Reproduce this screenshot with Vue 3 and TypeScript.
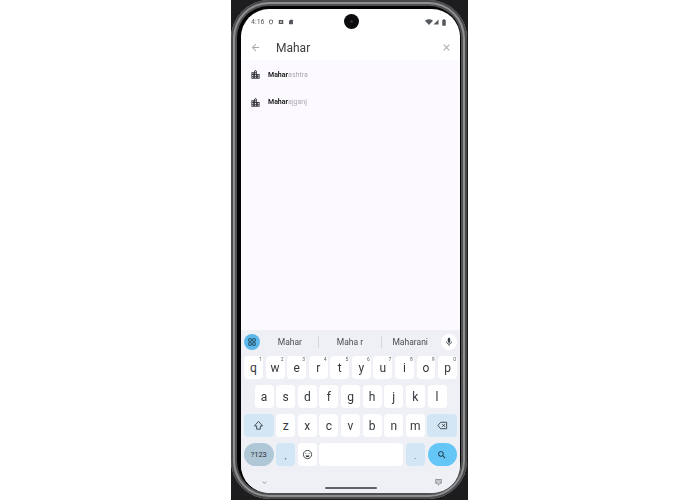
<script setup lang="ts">
const results = [
  { match: 'Mahar', rest: 'ashtra' },
  { match: 'Mahar', rest: 'ajganj' }
]

const suggestions = ['Mahar', 'Maha r', 'Maharani']

const topRow = [
  ['q', '1'], ['w', '2'], ['e', '3'], ['r', '4'], ['t', '5'],
  ['y', '6'], ['u', '7'], ['i', '8'], ['o', '9'], ['p', '0']
]
const midRow = ['a', 's', 'd', 'f', 'g', 'h', 'j', 'k', 'l']
const lowRow = ['z', 'x', 'c', 'v', 'b', 'n', 'm']
</script>

<template>
  <div class="page">
    <div class="phone">
      <div class="bezel">
        <div class="screen">
          <span class="camera"><i></i></span>

          <div class="status-bar">
            <div class="status-left">
              <span class="time">4:16</span>
              <svg class="st shield" viewBox="0 0 24 24"><path d="M12 2l8 3v6c0 5-3.400 9.400-8 11-4.600-1.600-8-6-8-11V5l8-3zm0 3L7 7v4c0 3.400 2.100 6.500 5 7.800 2.900-1.300 5-4.400 5-7.800V7l-5-2z" /></svg>
              <svg class="st" viewBox="0 0 24 24"><path d="M3 4h18v16H3V4zm6 5v6h6V9H9z" /></svg>
              <svg class="st" viewBox="0 0 24 24"><path d="M9 3h9a2 2 0 0 1 2 2v15a1 1 0 0 1-1 1H5a1 1 0 0 1-1-1V8l5-5z" /></svg>
            </div>
            <div class="status-right">
              <svg class="st wifi" viewBox="0 2 24 18"><path d="M12 20L0 7c7-6 17-6 24 0L12 20z" /></svg>
              <svg class="st" viewBox="0 0 24 24"><path d="M22 2v20H2L22 2z" /></svg>
              <svg class="st battery" viewBox="0 0 12 24"><path d="M3 3V1h6v2h2a1 1 0 0 1 1 1v18a1 1 0 0 1-1 1H1a1 1 0 0 1-1-1V4a1 1 0 0 1 1-1h2z" /></svg>
            </div>
          </div>

          <div class="search-bar">
            <svg class="bar-icon" viewBox="0 0 24 24"><path d="M20 11H7.830l5.590-5.590L12 4l-8 8 8 8 1.410-1.410L7.830 13H20v-2z" /></svg>
            <span class="query">Mahar</span>
            <svg class="bar-icon" viewBox="0 0 24 24"><path d="M19 6.410L17.590 5 12 10.590 6.410 5 5 6.410 10.590 12 5 17.590 6.410 19 12 13.410 17.590 19 19 17.590 13.410 12z" /></svg>
          </div>

          <div class="results">
            <div v-for="item in results" :key="item.rest" class="result">
              <svg class="city" viewBox="0 0 24 24"><path d="M15 11V5l-3-3-3 3v2H3v14h18V11h-6zm-8 8H5v-2h2v2zm0-4H5v-2h2v2zm0-4H5V9h2v2zm6 8h-2v-2h2v2zm0-4h-2v-2h2v2zm0-4h-2V9h2v2zm0-4h-2V5h2v2zm6 12h-2v-2h2v2zm0-4h-2v-2h2v2z" /></svg>
              <span class="result-text"><b>{{ item.match }}</b><span>{{ item.rest }}</span></span>
            </div>
          </div>

          <div class="keyboard">
            <div class="suggest-row">
              <span class="round-btn blue">
                <svg viewBox="0 0 24 24" fill="none" stroke="#1c3a4d" stroke-width="2.200"><rect x="4" y="4" width="6.500" height="6.500" rx="1.500" /><rect x="13.500" y="4" width="6.500" height="6.500" rx="1.500" /><rect x="4" y="13.500" width="6.500" height="6.500" rx="1.500" /><rect x="13.500" y="13.500" width="6.500" height="6.500" rx="1.500" /></svg>
              </span>
              <div class="suggestions">
                <span v-for="word in suggestions" :key="word" class="suggestion">{{ word }}</span>
              </div>
              <span class="round-btn white">
                <svg viewBox="0 0 24 24" fill="#3a3f44"><path d="M12 14a3 3 0 0 0 3-3V5a3 3 0 0 0-6 0v6a3 3 0 0 0 3 3zm5.300-3c0 3-2.500 5.100-5.300 5.100S6.700 14 6.700 11H5c0 3.400 2.700 6.200 6 6.700V21h2v-3.300c3.300-.5 6-3.300 6-6.700h-1.700z" /></svg>
              </span>
            </div>

            <div class="keys">
              <div class="key-row">
                <span v-for="k in topRow" :key="k[0]" class="key">{{ k[0] }}<sup>{{ k[1] }}</sup></span>
              </div>
              <div class="key-row inset">
                <span v-for="k in midRow" :key="k" class="key">{{ k }}</span>
              </div>
              <div class="key-row">
                <span class="key wide fn">
                  <svg viewBox="0 0 24 24" fill="none" stroke="#2b3034" stroke-width="1.800" stroke-linejoin="round"><path d="M12 3l9 10h-5v7H8v-7H3l9-10z" /></svg>
                </span>
                <span v-for="k in lowRow" :key="k" class="key">{{ k }}</span>
                <span class="key wide fn">
                  <svg viewBox="0 0 24 24" fill="none" stroke="#2b3034" stroke-width="1.800" stroke-linejoin="round"><path d="M8 5h13v14H8l-6-7 6-7z" /><path d="M11.500 9l6 6m0-6l-6 6" /></svg>
                </span>
              </div>
              <div class="key-row">
                <span class="key wide pill grey">?123</span>
                <span class="key fn mark">,</span>
                <span class="key">
                  <svg class="emoji" viewBox="0 0 24 24" fill="none" stroke="#2b3034" stroke-width="1.800"><circle cx="12" cy="12" r="9" /><circle cx="8.500" cy="10" r="1.100" fill="#2b3034" stroke="none" /><circle cx="15.500" cy="10" r="1.100" fill="#2b3034" stroke="none" /><path d="M7.500 14h9c-.6 2.300-2.300 3.500-4.500 3.500S8.100 16.300 7.500 14z" fill="#2b3034" stroke="none" /></svg>
                </span>
                <span class="key space"></span>
                <span class="key fn mark">.</span>
                <span class="key wide pill action">
                  <svg class="search" viewBox="0 0 24 24" fill="#16303f"><path d="M15.500 14h-.79l-.28-.27A6.470 6.470 0 0 0 16 9.500 6.500 6.500 0 1 0 9.500 16c1.610 0 3.090-.59 4.230-1.570l.27.28v.79l5 4.990L20.490 19l-4.990-5zm-6 0C7.010 14 5 11.990 5 9.500S7.010 5 9.500 5 14 7.010 14 9.500 11.990 14 9.500 14z" /></svg>
                </span>
              </div>
            </div>

            <div class="nav-row">
              <svg viewBox="0 0 24 24" fill="none" stroke="#73777c" stroke-width="2.600"><path d="M6 9l6 6 6-6" /></svg>
              <svg class="kb-hide" viewBox="0 0 24 24" fill="#94989d"><path d="M20 3H4c-1.100 0-1.990.9-1.990 2L2 15c0 1.100.9 2 2 2h16c1.100 0 2-.9 2-2V5c0-1.100-.9-2-2-2zm-9 3h2v2h-2V6zm0 3h2v2h-2V9zM8 6h2v2H8V6zm0 3h2v2H8V9zm-1 2H5V9h2v2zm0-3H5V6h2v2zm9 7H8v-2h8v2zm0-4h-2V9h2v2zm0-3h-2V6h2v2zm3 3h-2V9h2v2zm0-3h-2V6h2v2zm-7 15l4-4H8l4 4z" /></svg>
            </div>
            <div class="home-bar"></div>
          </div>
        </div>
      </div>
    </div>
  </div>
</template>

<style>
html,
body {
  margin: 0;
  background: #ffffff;
}
</style>

<style scoped>
.page {
  width: 699px;
  height: 500px;
  display: flex;
  justify-content: center;
  overflow: hidden;
  background: #ffffff;
  font-family: Roboto, "Liberation Sans", sans-serif;
}

.phone {
  width: 237px;
  height: 500px;
  background: #1d1d1f;
}

.bezel {
  width: 236px;
  height: 499px;
  box-sizing: border-box;
  padding: 9px 7px 6px 10px;
  border-radius: 38px;
  background: #050506;
  box-shadow: inset 0 0 0 2px #4a4a4c, inset 0 0 0 4px #8e8f91, inset 0 0 0 6px #505052;
}

.screen {
  position: relative;
  height: 100%;
  display: flex;
  flex-direction: column;
  overflow: hidden;
  border-radius: 28px;
  background: #ffffff;
  filter: blur(0.35px);
}

.camera {
  position: absolute;
  top: 5px;
  left: 103px;
  width: 15px;
  height: 15px;
  display: flex;
  align-items: center;
  justify-content: center;
  border-radius: 50%;
  background: #0c0c0e;
}

.camera i {
  width: 3px;
  height: 3px;
  border-radius: 50%;
  background: #3a2a30;
}

.status-bar {
  height: 26px;
  padding: 0 14px 0 10px;
  display: flex;
  flex: none;
  align-items: center;
  justify-content: space-between;
  box-sizing: border-box;
}

.status-left,
.status-right {
  display: flex;
  align-items: center;
  gap: 4px;
}

.time {
  font-size: 7px;
  color: #55585c;
}

.st {
  width: 6px;
  height: 6px;
  fill: #55585c;
}

.shield {
  margin-left: -1px;
}

.wifi {
  width: 8px;
  margin-right: -4px;
}

.battery {
  width: 4px;
  height: 7px;
  margin-left: -1px;
}

.search-bar {
  height: 25px;
  padding: 0 8px 0 9px;
  display: flex;
  flex: none;
  align-items: center;
  background: #ffffff;
}

.bar-icon {
  width: 11px;
  height: 11px;
  fill: #a6a8ab;
}

.query {
  flex: 1;
  margin-left: 15px;
  font-size: 12px;
  color: #3b3d40;
}

.results {
  flex: 1;
  padding-top: 1px;
  background: #fdfaff;
}

.result {
  height: 27.500px;
  padding-left: 8.500px;
  display: flex;
  align-items: center;
  gap: 7.500px;
}

.city {
  width: 11px;
  height: 11px;
  fill: #3b3d40;
}

.result-text {
  font-size: 7px;
  color: #a9aaae;
}

.result-text b {
  color: #1f2023;
}

.keyboard {
  flex: none;
  height: 163px;
  padding: 3px 3px 0;
  box-sizing: border-box;
  display: flex;
  flex-direction: column;
  background: #eff0f5;
}

.suggest-row {
  height: 18px;
  display: flex;
  align-items: center;
}

.round-btn {
  width: 16px;
  height: 16px;
  flex: none;
  display: flex;
  align-items: center;
  justify-content: center;
  border-radius: 50%;
}

.round-btn svg {
  width: 10px;
  height: 10px;
}

.blue {
  background: #5cb8ea;
}

.white {
  background: #ffffff;
}

.suggestions {
  flex: 1;
  margin: 0 3px 0 2px;
  display: flex;
}

.suggestion {
  flex: 56 1 0;
  text-align: center;
  font-size: 8.500px;
  line-height: 12px;
  color: #4a4e52;
}

.suggestion:nth-child(2) {
  flex: 63 1 0;
  border-left: 1px solid #d5d7dc;
  border-right: 1px solid #d5d7dc;
}

.keys {
  margin-top: 5px;
  display: flex;
  flex-direction: column;
  gap: 6px;
}

.key-row {
  height: 23px;
  display: flex;
  gap: 2.600px;
}

.inset {
  padding: 0 10.500px;
}

.key {
  position: relative;
  flex: 1 1 0;
  min-width: 0;
  display: flex;
  align-items: center;
  justify-content: center;
  border-radius: 4px;
  background: #ffffff;
  font-size: 12px;
  color: #33373b;
}

.key sup {
  position: absolute;
  top: 0;
  right: 1px;
  font-size: 5px;
  line-height: 7px;
  color: #55595d;
}

.wide {
  flex: 0 0 29.500px;
}

.fn {
  background: #d3e6f5;
}

.key svg {
  width: 11px;
  height: 11px;
}

.key .search {
  width: 10px;
  height: 10px;
}

.pill {
  border-radius: 11.500px;
}

.grey {
  background: #afc7d6;
  font-size: 7.500px;
  color: #2b3034;
}

.action {
  background: #64c6f7;
}

.mark {
  font-size: 8px;
  padding-top: 3px;
  box-sizing: border-box;
}

.space {
  flex: 0 0 84px;
}

.nav-row {
  margin-top: 12px;
  padding: 0 14px 0 17px;
  display: flex;
  align-items: center;
  justify-content: space-between;
}

.nav-row svg {
  width: 7px;
  height: 7px;
}

.nav-row .kb-hide {
  width: 9px;
  height: 8px;
}

.home-bar {
  width: 52px;
  height: 2px;
  margin: 1px auto 0;
  border-radius: 1px;
  background: #5f6266;
}
</style>
